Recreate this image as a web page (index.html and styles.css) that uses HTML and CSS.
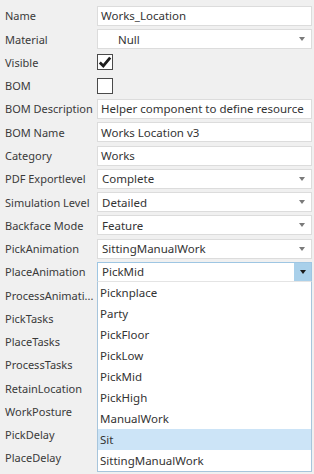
FILE: index.html
```html
<!DOCTYPE html>
<html>
<head>
    <title>Properties</title>
    <link rel="stylesheet" href="styles.css">
</head>
<body>
  <div class="props">
    <div class="row"><span class="label">Name</span><div class="field">Works_Location</div></div>
    <div class="row"><span class="label">Material</span><div class="field combo"><span class="null">Null</span><span class="arrow"></span></div></div>
    <div class="row"><span class="label">Visible</span><div class="check checked">
      <svg width="14" height="14" viewBox="0 0 14 14"><path d="M1.8 7.4 L5.3 10.9 L12.2 2.6" fill="none" stroke="#1e1e1e" stroke-width="2.8"/></svg>
    </div></div>
    <div class="row"><span class="label">BOM</span><div class="check"></div></div>
    <div class="row"><span class="label">BOM Description</span><div class="field">Helper component to define resource</div></div>
    <div class="row"><span class="label">BOM Name</span><div class="field">Works Location v3</div></div>
    <div class="row"><span class="label">Category</span><div class="field">Works</div></div>
    <div class="row"><span class="label">PDF Exportlevel</span><div class="field combo"><span>Complete</span><span class="arrow"></span></div></div>
    <div class="row"><span class="label">Simulation Level</span><div class="field combo"><span>Detailed</span><span class="arrow"></span></div></div>
    <div class="row"><span class="label">Backface Mode</span><div class="field combo"><span>Feature</span><span class="arrow"></span></div></div>
    <div class="row"><span class="label">PickAnimation</span><div class="field combo"><span>SittingManualWork</span><span class="arrow"></span></div></div>
    <div class="row open-row">
      <span class="label">PlaceAnimation</span>
      <div class="field combo focus"><span>PickMid</span><span class="drop-btn"><span class="arrow dark"></span></span></div>
      <ul class="droplist">
        <li>Picknplace</li>
        <li>Party</li>
        <li>PickFloor</li>
        <li>PickLow</li>
        <li>PickMid</li>
        <li>PickHigh</li>
        <li>ManualWork</li>
        <li class="hover">Sit</li>
        <li>SittingManualWork</li>
      </ul>
    </div>
    <div class="row"><span class="label">ProcessAnimati...</span></div>
    <div class="row"><span class="label">PickTasks</span></div>
    <div class="row"><span class="label">PlaceTasks</span></div>
    <div class="row"><span class="label">ProcessTasks</span></div>
    <div class="row"><span class="label">RetainLocation</span></div>
    <div class="row"><span class="label">WorkPosture</span></div>
    <div class="row"><span class="label">PickDelay</span></div>
    <div class="row"><span class="label">PlaceDelay</span></div>
  </div>
</body>
</html>
```

FILE: styles.css
```css
body {
    margin: 0;
    background-color: #f0f0f0;
    font-family: "Noto Sans", "Open Sans", sans-serif;
    font-size: 11.5px;
    color: #333;
}

.props {
    padding-top: 4.3px;
    overflow: hidden;
    height: 474px;
    box-sizing: border-box;
}

.row {
    display: flex;
    align-items: center;
    height: 23.27px;
}

.open-row {
    position: relative;
}

.label {
    width: 92px;
    padding-left: 5px;
    flex-shrink: 0;
    white-space: nowrap;
    font-size: 11px;
    color: #3a3a3a;
}

.field {
    box-sizing: border-box;
    width: 215px;
    height: 20px;
    border: 1px solid #dcdcdc;
    background-color: #fff;
    display: flex;
    align-items: center;
    padding-left: 3px;
    white-space: nowrap;
    overflow: hidden;
}

.combo {
    justify-content: space-between;
    padding-left: 4px;
}

.null {
    padding-left: 16px;
}

.arrow {
    width: 0;
    height: 0;
    border-left: 3.5px solid transparent;
    border-right: 3.5px solid transparent;
    border-top: 4px solid #7a7a7a;
    margin-right: 6px;
}

.arrow.dark {
    border-top-color: #1a1a1a;
    margin-right: 0;
}

.focus {
    border-color: #9ec6e3;
    padding-right: 0;
}

.drop-btn {
    width: 17px;
    height: 100%;
    background-color: #a9d0ea;
    display: flex;
    align-items: center;
    justify-content: center;
}

.check {
    box-sizing: border-box;
    width: 16px;
    height: 16px;
    border: 1px solid #4a4a4a;
    background-color: #fff;
    display: flex;
    align-items: center;
    justify-content: center;
}

.droplist {
    position: absolute;
    left: 97px;
    top: 21px;
    width: 215px;
    box-sizing: border-box;
    margin: 0;
    padding: 0;
    list-style: none;
    background-color: #fff;
    border: 1px solid #a7c5dc;
    border-top-color: #e4e4e4;
}

.droplist li {
    height: 21px;
    line-height: 21px;
    padding-left: 2px;
}

.droplist .hover {
    background-color: #cce4f7;
}
```
